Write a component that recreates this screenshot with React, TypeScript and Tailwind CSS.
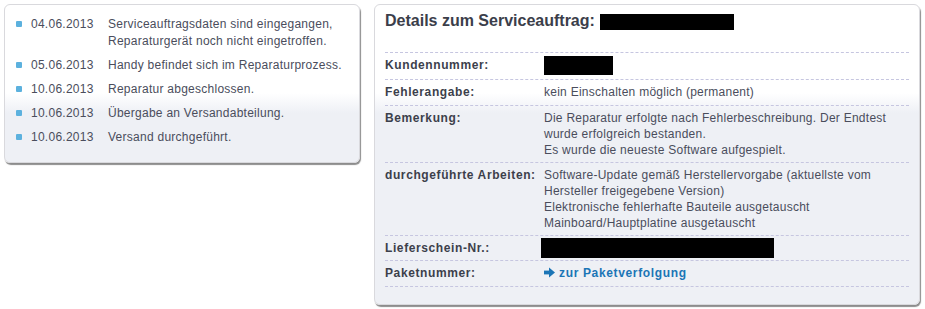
import React from 'react';

const history = [
  { date: '04.06.2013', text: ['Serviceauftragsdaten sind eingegangen,', 'Reparaturgerät noch nicht eingetroffen.'] },
  { date: '05.06.2013', text: ['Handy befindet sich im Reparaturprozess.'] },
  { date: '10.06.2013', text: ['Reparatur abgeschlossen.'] },
  { date: '10.06.2013', text: ['Übergabe an Versandabteilung.'] },
  { date: '10.06.2013', text: ['Versand durchgeführt.'] },
];

function Redacted({ className }: { className: string }) {
  return <span className={`inline-block bg-black align-top ${className}`} />;
}

function ArrowIcon() {
  return (
    <svg width="11" height="11" viewBox="0 0 11 11" className="inline-block mr-[4px] -mt-[2px] align-middle">
      <rect x="0" y="3.6" width="6" height="3.8" fill="#1b75b6" />
      <path d="M5 0.5 L11 5.5 L5 10.5 Z" fill="#1b75b6" />
    </svg>
  );
}

function Row({ label, children, className = '' }: { label: string; children: React.ReactNode; className?: string }) {
  return (
    <div className={`grid grid-cols-[159px_1fr] border-t border-dashed border-[#c6c6e0] pt-[4px] pb-[4px] ${className}`}>
      <div className="font-bold tracking-[0.6px] text-[#3c3f4b]">{label}</div>
      <div className="text-[#4a4d5c]">{children}</div>
    </div>
  );
}

export default function App() {
  return (
    <div
      className="flex items-start gap-[14px] pl-[4px] pt-[4px] bg-white w-[925px] h-[309px] text-[12px] leading-[16px] tracking-[0.26px]"
      style={{ fontFamily: '"Liberation Sans", Arial, sans-serif' }}
    >
      {/* Status history */}
      <div className="w-[356px] h-[159px] rounded-[6px] border border-[#d9d9dd] shadow-[1px_2px_1px_rgba(0,0,0,0.45)] bg-[linear-gradient(#ffffff_88px,#eef0f5_108px)] pt-[11px] pl-[11px]">
        {history.map((item, i) => (
          <div key={i} className="flex mb-[7px] leading-[17px] text-[#4a4d5c]">
            <span className="w-[6px] h-[6px] mt-[5px] rounded-[1px] bg-[#5cb1de] shrink-0" />
            <span className="w-[86px] pl-[9px] shrink-0">{item.date}</span>
            <div>
              {item.text.map((line, j) => (
                <div key={j}>{line}</div>
              ))}
            </div>
          </div>
        ))}
      </div>

      {/* Order details */}
      <div className="w-[546px] rounded-[6px] border border-[#d9d9dd] shadow-[1px_2px_1px_rgba(0,0,0,0.45)] bg-[linear-gradient(#ffffff_88px,#eef0f5_108px)] px-[10px] pb-[17px]">
        <div className="h-[47px] pt-[6px] flex items-start">
          <span className="text-[16px] leading-[19px] font-bold tracking-normal text-[#3b3e4a]">Details zum Serviceauftrag:</span>
          <Redacted className="ml-[5px] mt-[3px] w-[134px] h-[16px]" />
        </div>
        <Row label="Kundennummer:" className="pb-[5px]">
          <Redacted className="-my-[1px] w-[69px] h-[19px]" />
        </Row>
        <Row label="Fehlerangabe:" className="pb-[5px]">kein Einschalten möglich (permanent)</Row>
        <Row label="Bemerkung:">
          <div>Die Reparatur erfolgte nach Fehlerbeschreibung. Der Endtest</div>
          <div>wurde erfolgreich bestanden.</div>
          <div>Es wurde die neueste Software aufgespielt.</div>
        </Row>
        <Row label="durchgeführte Arbeiten:">
          <div>Software-Update gemäß Herstellervorgabe (aktuellste vom</div>
          <div>Hersteller freigegebene Version)</div>
          <div>Elektronische fehlerhafte Bauteile ausgetauscht</div>
          <div>Mainboard/Hauptplatine ausgetauscht</div>
        </Row>
        <Row label="Lieferschein-Nr.:">
          <Redacted className="-ml-[3px] -mt-[2px] -mb-[2px] w-[233px] h-[20px]" />
        </Row>
        <Row label="Paketnummer:" className="border-b pb-[5px]">
          <a href="#" className="font-bold tracking-[0.65px] text-[#1b75b6]">
            <ArrowIcon />
            zur Paketverfolgung
          </a>
        </Row>
      </div>
    </div>
  );
}
